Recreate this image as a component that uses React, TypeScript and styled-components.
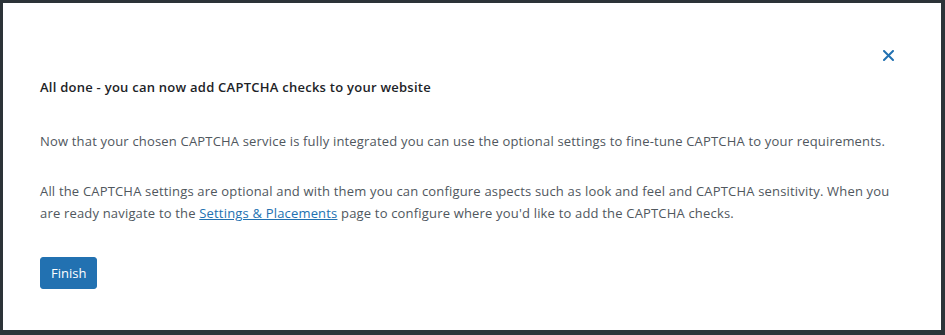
import React from 'react';
import styled, { createGlobalStyle } from 'styled-components';

const GlobalStyle = createGlobalStyle`
  html, body {
    margin: 0;
    padding: 0;
    background: #2c3338;
  }
  body {
    font-family: 'Open Sans', 'Noto Sans', sans-serif;
    -webkit-font-smoothing: antialiased;
  }
`;

const Frame = styled.div`
  width: 945px;
  height: 335px;
  box-sizing: border-box;
  padding: 3px 4px 5px 3px;
  background: #2c3338;
`;

const Panel = styled.section`
  height: 100%;
  box-sizing: border-box;
  background: #fff;
  padding: 0 37px;
  display: flex;
  flex-direction: column;
  color: #50575e;
  font-size: 13px;
`;

const TopBar = styled.div`
  display: flex;
  justify-content: flex-end;
  padding-top: 42px;
  margin-right: 5px;
`;

const CloseButton = styled.button`
  width: 21px;
  height: 21px;
  padding: 0;
  border: 0;
  background: transparent;
  color: #2271b1;
  display: flex;
  align-items: center;
  justify-content: center;
  cursor: pointer;
`;

const Heading = styled.h2`
  margin: 10px 0 0;
  font-size: 13px;
  font-weight: 600;
  line-height: 22px;
  letter-spacing: 0.25px;
  color: #1d2327;
`;

const Text = styled.p<{ $gap: number }>`
  margin: ${(p) => p.$gap}px 0 0;
  line-height: 22px;
  letter-spacing: 0.18px;
`;

const Link = styled.a`
  color: #2271b1;
  text-decoration: underline;
`;

const Finish = styled.button`
  align-self: flex-start;
  margin-top: 33px;
  height: 32px;
  padding: 0 10px;
  border: 1px solid #2271b1;
  border-radius: 3px;
  background: #2271b1;
  color: #fff;
  font-family: inherit;
  font-size: 13px;
  cursor: pointer;
`;

export default function App() {
  return (
    <Frame>
      <GlobalStyle />
      <Panel>
        <TopBar>
          <CloseButton aria-label="Close">
            <svg width="11" height="11" viewBox="0 0 11 11">
              <path d="M1 1 L10 10 M10 1 L1 10" stroke="currentColor" strokeWidth="2" strokeLinecap="round" />
            </svg>
          </CloseButton>
        </TopBar>
        <Heading>All done - you can now add CAPTCHA checks to your website</Heading>
        <Text $gap={32}>
          Now that your chosen CAPTCHA service is fully integrated you can use the optional settings to fine-tune CAPTCHA to your requirements.
        </Text>
        <Text $gap={28}>
          All the CAPTCHA settings are optional and with them you can configure aspects such as look and feel and CAPTCHA sensitivity. When you are ready navigate to the <Link href="#">Settings &amp; Placements</Link> page to configure where you'd like to add the CAPTCHA checks.
        </Text>
        <Finish>Finish</Finish>
      </Panel>
    </Frame>
  );
}
